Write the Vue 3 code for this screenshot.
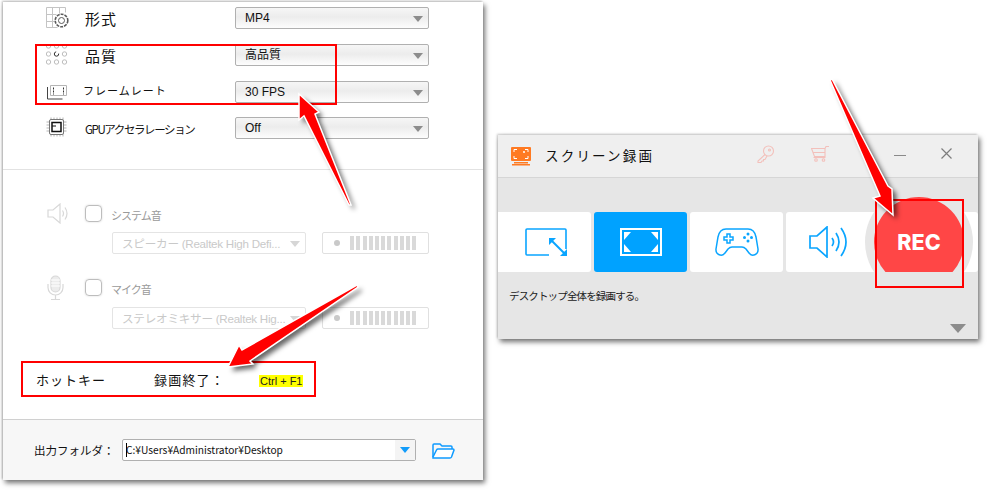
<template>
  <div class="page">
    <section class="panel">
      <div class="settings">
        <div v-for="row in videoRows" :key="row.label" class="row" :class="row.rowClass">
          <span class="row-icon">
            <svg v-if="row.icon === 'format'" width="24" height="22" viewBox="0 0 24 22" fill="none">
              <path d="M.5 .5h19M.5 7.500h10M.5 14.500h8M.5 20.500h11M.5 .5v20M6.500 .5v20M13.500 .5v6M19.500 .5v5" stroke="#c4c4c4" />
              <circle cx="15.500" cy="13.500" r="6.300" stroke="#5a5a5a" stroke-width="1.600" stroke-dasharray="3 1" />
              <circle cx="15.500" cy="13.500" r="3" stroke="#5a5a5a" />
            </svg>
            <svg v-else-if="row.icon === 'quality'" width="22" height="22" viewBox="0 0 22 22" fill="none" stroke="#bdbdbd">
              <circle v-for="d in qualityDots" :key="d.x + '-' + d.y" :cx="d.x" :cy="d.y" r="2.200" :stroke="d.dark ? '#333' : '#bdbdbd'" :stroke-dasharray="d.dark ? '9 3' : null" />
            </svg>
            <svg v-else-if="row.icon === 'frame'" width="22" height="16" viewBox="0 0 22 16" fill="none" class="frame-icon">
              <path d="M4.500 1.500h16v10h-16z" stroke="#b5b5b5" />
              <path d="M1.500 3v12h15" stroke="#444" />
              <path d="M7.500 3.500v7M17.500 3.500v7" stroke="#333" stroke-dasharray="2 1" />
            </svg>
            <svg v-else width="21" height="20" viewBox="0 0 21 20" fill="none">
              <path d="M5 .5v19M8 .5v19M11 .5v19M14 .5v19M17 .5v19M.5 5h20M.5 8h20M.5 11h20M.5 14h20" stroke="#b5b5b5" />
              <rect x="3.500" y="2.500" width="14" height="15" rx="1.500" fill="#fff" stroke="#777" />
              <path d="M6 5.500h9v9H6z" fill="#fff" stroke="#111" stroke-width="1.500" />
              <path d="M6 9h4" stroke="#111" />
            </svg>
          </span>
          <span class="row-label" :class="row.labelClass">{{ row.label }}</span>
          <div class="select">
            <span>{{ row.value }}</span>
            <i class="caret"></i>
          </div>
        </div>
      </div>

      <div class="audio">
        <div v-for="item in audioRows" :key="item.label" class="audio-item">
          <div class="audio-head">
            <span class="audio-icon">
              <svg v-if="item.icon === 'speaker'" width="22" height="21" viewBox="0 0 22 21" fill="none" stroke="#d8d8d8" stroke-width="1.200">
                <path d="M1 7h5l7-6v19l-7-6H1z" />
                <path d="M15.500 7.500q2 3 0 6M18 4.500q4 6 0 12" />
              </svg>
              <svg v-else width="17" height="25" viewBox="0 0 17 25" fill="none" stroke="#d8d8d8" stroke-width="1.200">
                <rect x="4" y="1" width="9" height="16" rx="4.500" fill="#ececec" />
                <path d="M4 5h9M4 8h9M4 11h9" stroke="#fff" />
                <path d="M1 9v3.500a7.500 7.500 0 0 0 15 0V9M8.500 20v4M4 24.500h9" />
              </svg>
            </span>
            <span class="checkbox"></span>
            <span class="audio-label">{{ item.label }}</span>
          </div>
          <div class="audio-controls">
            <div class="select select-off">
              <span>{{ item.device }}</span>
              <i class="caret"></i>
            </div>
            <div class="meter">
              <i class="meter-dot"></i>
              <i v-for="n in 11" :key="n" class="meter-bar"></i>
            </div>
          </div>
        </div>
      </div>

      <div class="hotkey">
        <span class="hotkey-name">ホットキー</span>
        <span class="hotkey-action">録画終了：</span>
        <mark class="hotkey-keys">Ctrl + F1</mark>
      </div>

      <footer class="output">
        <span class="output-label">出力フォルダ：</span>
        <div class="path-box">
          <span class="path-text"><b class="cursor"></b>C:¥Users¥Administrator¥Desktop</span>
          <span class="path-btn"><i></i></span>
        </div>
        <svg class="folder" width="23" height="16" viewBox="0 0 23 16" fill="none" stroke="#0f9bff" stroke-width="1.500">
          <path d="M1 14V2q0-1 1-1h6l2 2h9q1 0 1 1v2" />
          <path d="M1 15h17q1 0 1.500-1L22 7q0-1-1-1H6q-1 0-1.500 1L1 14z" fill="#fff" />
        </svg>
      </footer>
    </section>

    <section class="recorder">
      <header class="titlebar">
        <svg class="logo" width="20" height="19" viewBox="0 0 20 19">
          <rect x="0" y="0" width="20" height="14" rx="1" fill="#ff7a22" />
          <path d="M3 5V2.500h3M14 2.500h3V5M3 9v2.500h3M14 11.500h3V9" fill="none" stroke="#fff" />
          <circle cx="13" cy="5" r="1" fill="#fff" />
          <path d="M3 15h14v1.500H3zM1 17h18v1.500H1z" fill="#ff7a22" />
        </svg>
        <span class="title">スクリーン録画</span>
        <svg class="tb-key" width="18" height="18" viewBox="0 0 18 18" fill="none" stroke="#f3c0bb" stroke-width="1.100">
          <circle cx="11.500" cy="6" r="5" />
          <circle cx="12.500" cy="5" r="1" />
          <path d="M8 9.500L1 16v1.500h3l1-1.500h1.500V14.500h1.500L10 11" />
        </svg>
        <svg class="tb-cart" width="19" height="16" viewBox="0 0 19 16" fill="none" stroke="#f3c0bb" stroke-width="1.100">
          <path d="M.5 2.500h13.500v8H3.500zM14 2.500l1-2h3M2 6.500h12" />
          <path d="M2.500 11.500h12" />
          <circle cx="5" cy="14" r="1.300" />
          <circle cx="12.500" cy="14" r="1.300" />
        </svg>
        <i class="tb-min"></i>
        <svg class="tb-close" width="11" height="11" viewBox="0 0 11 11" fill="none" stroke="#7d7d7d" stroke-width="1.200">
          <path d="M.5 .5l10 10M10.500 .5l-10 10" />
        </svg>
      </header>

      <div class="rec-body">
        <div class="tiles">
          <div class="tile">
            <svg class="ico-region" width="42" height="28" viewBox="0 0 42 28" fill="none" stroke="#0aa5ff" stroke-width="1.600">
              <path d="M24 27H2q-1 0-1-1V2q0-1 1-1h38q1 0 1 1v19" />
              <path d="M26 12l13 13" stroke-width="2" />
              <path d="M24 10h7l-7 7zM42 28h-7l7-7z" fill="#0aa5ff" stroke="none" />
            </svg>
          </div>
          <div class="tile tile-active">
            <svg width="42" height="28" viewBox="0 0 42 28" fill="none">
              <rect x="1" y="1" width="40" height="26" stroke="#fff" stroke-width="2" />
              <path d="M4 4h7l-7 8zM38 4h-7l7 8zM4 24h7l-7-8zM38 24h-7l7-8z" fill="#fff" />
            </svg>
          </div>
          <div class="tile">
            <svg class="ico-game" width="44" height="30" viewBox="0 0 44 30" fill="none" stroke="#0aa5ff" stroke-width="1.500">
              <path d="M11 2h22c5 0 7 3 8 8l2 12c.5 6-6 8-9 4l-3-4c-1-1-2-2-4-2H17c-2 0-3 1-4 2l-3 4c-3 4-9.500 2-9-4L3 10c1-5 3-8 8-8z" />
              <path d="M9 10h3V7h3v3h3v3h-3v3h-3v-3H9z" />
              <circle cx="33" cy="7" r="1.500" fill="#0aa5ff" stroke="none" />
              <circle cx="29.500" cy="10.500" r="1.500" fill="#0aa5ff" stroke="none" />
              <circle cx="36.500" cy="10.500" r="1.500" fill="#0aa5ff" stroke="none" />
              <circle cx="33" cy="14" r="1.500" fill="#0aa5ff" stroke="none" />
            </svg>
          </div>
          <div class="tile">
            <svg class="ico-sound" width="40" height="32" viewBox="0 0 40 32" fill="none" stroke="#0aa5ff" stroke-width="1.700">
              <path d="M1 10h7L18 1v30L8 22H1z" />
              <path d="M23 12q3 4 0 8M27 7q6 9 0 18M32 2q10 14 0 28" />
            </svg>
          </div>
          <div class="tile tile-last"></div>
          <div class="rec-halo">
            <button class="rec-btn">REC</button>
          </div>
        </div>
        <p class="rec-desc">デスクトップ全体を録画する。</p>
        <i class="more"></i>
      </div>
    </section>

    <!-- annotations drawn on top of the screenshot -->
    <div class="mark mark-video"></div>
    <div class="mark mark-hotkey"></div>
    <div class="mark mark-rec"></div>
    <svg class="arrows" width="990" height="490" viewBox="0 0 990 490">
      <g v-for="(pts, i) in arrows" :key="i">
        <polygon :points="pts" class="arrow-shadow" />
        <polygon :points="pts" class="arrow" />
      </g>
    </svg>
  </div>
</template>

<script setup>
const videoRows = [
  { label: '形式', value: 'MP4', icon: 'format', labelClass: 'big', rowClass: 'r-format' },
  { label: '品質', value: '高品質', icon: 'quality', labelClass: 'big', rowClass: 'r-quality' },
  { label: 'フレームレート', value: '30 FPS', icon: 'frame', labelClass: 'spaced', rowClass: 'r-frame' },
  { label: 'GPUアクセラレーション', value: 'Off', icon: 'gpu', labelClass: 'small', rowClass: 'r-gpu' }
]

const audioRows = [
  { label: 'システム音', device: 'スピーカー (Realtek High Defi...', icon: 'speaker' },
  { label: 'マイク音', device: 'ステレオミキサー (Realtek Hig...', icon: 'mic' }
]

const qualityDots = []
for (const y of [2, 10, 18]) {
  for (const x of [2.5, 10.5, 18.5]) {
    qualityDots.push({ x, y, dark: x === 10.5 && y === 10 })
  }
}

const arrows = [
  '299,94 319,112 315,114 351,205 349,205 304,116 299,120',
  '228,367 239,345 242,350 357,285 358,287 250,361 253,364',
  '893,215 873,198 880,196 830,80 832,79 888,186 892,189'
]
</script>

<style>
html, body {
  margin: 0;
  background: #fff;
}
</style>

<style scoped>
.page {
  position: relative;
  display: flex;
  align-items: flex-start;
  width: 990px;
  height: 490px;
  overflow: hidden;
  padding: 2px 0 0 3px;
  box-sizing: border-box;
  font-family: "Noto Sans CJK JP", "Liberation Sans", sans-serif;
  color: #111;
}

.panel {
  width: 480px;
  height: 478px;
  display: flex;
  flex-direction: column;
  background: #fff;
  box-shadow: 2px 3px 5px rgba(0, 0, 0, 0.55), -1px -1px 2px rgba(0, 0, 0, 0.25);
}

.settings {
  height: 162px;
  border-bottom: 1px solid #e2e2e2;
  padding-top: 5px;
}

.row {
  display: flex;
  align-items: center;
  height: 22px;
  padding-left: 43px;
}

.r-quality { margin-top: 15px; }
.r-frame { margin-top: 15px; }
.r-gpu { margin-top: 14px; }

.row-icon {
  width: 39px;
  flex: none;
  display: flex;
}

.r-gpu .row-icon {
  margin-top: -2px;
}

.row-label {
  flex: 1;
  white-space: nowrap;
}

.row-label.big {
  font-size: 15px;
  letter-spacing: 1px;
}

.row-label.spaced {
  font-size: 11px;
  letter-spacing: 1px;
  margin: -5px 0 0 -2px;
}

.row-label.small {
  font-size: 11.500px;
  letter-spacing: -1.400px;
  margin-top: 2px;
}

.select {
  position: relative;
  width: 194px;
  height: 22px;
  margin-right: 54px;
  flex: none;
  box-sizing: border-box;
  border: 1px solid #b0b0b0;
  border-radius: 2px;
  background: linear-gradient(#f6f6f6, #ececec 45%, #fdfdfd);
  padding-left: 9px;
  font-family: "Liberation Sans", "Noto Sans CJK JP", sans-serif;
  font-size: 12px;
  line-height: 21px;
  white-space: nowrap;
  color: #111;
}

.caret {
  position: absolute;
  right: 5px;
  top: 8px;
  width: 0;
  height: 0;
  border-left: 5.500px solid transparent;
  border-right: 5.500px solid transparent;
  border-top: 6px solid #8c8c8c;
}

.audio {
  padding-top: 34px;
}

.audio-item {
  height: 74px;
}

.audio-item:last-child .audio-controls {
  margin-top: 11px;
}

.audio-head {
  display: flex;
  align-items: center;
  height: 18px;
  padding-left: 43px;
}

.audio-icon {
  width: 39px;
  height: 18px;
  flex: none;
  display: flex;
  align-items: center;
  justify-content: flex-start;
  padding-left: 1px;
  box-sizing: border-box;
}

.checkbox {
  width: 17px;
  height: 17px;
  flex: none;
  box-sizing: border-box;
  border: 1px solid #bdbdbd;
  border-radius: 4px;
  box-shadow: 0 0 2px #d5d5d5;
}

.audio-label {
  margin: 4px 0 0 9px;
  font-size: 11px;
  letter-spacing: -1px;
  color: #9a9a9a;
}

.audio-controls {
  display: flex;
  gap: 16px;
  margin: 10px 0 0 109px;
}

.select-off {
  margin-right: 0;
  border-color: #e4e4e4;
  background: #fff;
  color: #c9c9c9;
  font-size: 11.600px;
  letter-spacing: -0.250px;
}

.select-off .caret {
  border-top-color: #d6d6d6;
  right: 5px;
}

.meter {
  display: flex;
  align-items: center;
  width: 107px;
  height: 22px;
  box-sizing: border-box;
  border: 1px solid #e0e0e0;
  border-radius: 2px;
  padding-left: 11px;
  gap: 2.200px;
}

.meter-dot {
  width: 6px;
  height: 6px;
  margin-right: 8px;
  border-radius: 50%;
  background: #c9c9c9;
}

.meter-bar {
  width: 4px;
  height: 14px;
  background: #d9d9d9;
}

.hotkey {
  display: flex;
  align-items: center;
  height: 20px;
  margin-top: 17px;
  padding-left: 33px;
  font-size: 13px;
}

.hotkey-name {
  width: 118px;
  letter-spacing: 1px;
}

.hotkey-action {
  width: 105px;
  letter-spacing: 1.200px;
}

.hotkey-keys {
  margin-top: 3px;
  background: #ffff00;
  color: #222;
  font-family: "Liberation Sans", sans-serif;
  font-size: 11px;
  line-height: 12px;
  padding: 0 1px;
}

.output {
  display: flex;
  align-items: center;
  margin-top: auto;
  height: 61px;
  box-sizing: border-box;
  border-top: 1px solid #d0d0d0;
  background: #f7f7f7;
  padding-left: 31px;
}

.output-label {
  width: 88px;
  font-size: 11.500px;
}

.path-box {
  display: flex;
  align-items: center;
  width: 294px;
  height: 22px;
  box-sizing: border-box;
  border: 1px solid #b0b0b0;
  border-radius: 2px;
  background: #fff;
}

.path-text {
  flex: 1;
  padding: 0 0 2px 3px;
  font-size: 10.200px;
  white-space: nowrap;
}

.cursor {
  display: inline-block;
  width: 1px;
  height: 14px;
  margin-right: -1px;
  vertical-align: -3px;
  background: #000;
}

.path-btn {
  width: 20px;
  height: 20px;
  display: flex;
  align-items: center;
  justify-content: center;
  background: #f4f4f4;
}

.path-btn i {
  width: 0;
  height: 0;
  border-left: 5.500px solid transparent;
  border-right: 5.500px solid transparent;
  border-top: 6px solid #129cfa;
}

.folder {
  margin: 2px 0 0 16px;
}

.recorder {
  width: 480px;
  height: 204px;
  margin: 133px 0 0 15px;
  background: #e6e6e6;
  box-shadow: 2px 3px 5px rgba(0, 0, 0, 0.55), -1px -1px 2px rgba(0, 0, 0, 0.2);
}

.titlebar {
  display: flex;
  align-items: center;
  height: 43px;
  box-sizing: border-box;
  background: #efefef;
  border-bottom: 1px solid #d6d6d6;
  padding-left: 13px;
}

.logo {
  flex: none;
}

.title {
  margin: 0 0 3px 14px;
  width: 212px;
  font-size: 13.500px;
  letter-spacing: 2.200px;
  white-space: nowrap;
}

.tb-key { margin-bottom: 5px; }
.tb-cart { margin: 0 0 5px 36px; }

.tb-min {
  width: 12px;
  height: 1px;
  margin: 0 0 2px 64px;
  background: #8a8a8a;
}

.tb-close {
  margin: 0 0 6px 35px;
}

.rec-body {
  position: relative;
  height: 161px;
}

.tiles {
  position: relative;
  display: flex;
  gap: 3px;
  padding-top: 34px;
  overflow: hidden;
}

.tile {
  width: 93px;
  height: 60px;
  flex: none;
  display: flex;
  align-items: center;
  justify-content: center;
  background: #fff;
  border-radius: 0 3px 3px 0;
}

.tile + .tile {
  border-radius: 3px;
}

.tile-active {
  background: #00a2ff;
}

.tile-last {
  width: 96px;
}

.ico-region { margin-left: 2px; }
.ico-game { margin-left: 1px; }
.ico-sound { margin-right: 8px; }

.rec-halo {
  position: absolute;
  left: 367px;
  top: 10px;
  width: 108px;
  height: 108px;
  display: flex;
  align-items: center;
  justify-content: center;
  border-radius: 50%;
  background: #e6e6e6;
}

.rec-btn {
  width: 90px;
  height: 90px;
  border: 0;
  padding: 0;
  border-radius: 50%;
  background: #ff4646;
  color: #fff;
  font-family: "Inter", "Liberation Sans", sans-serif;
  font-size: 21.500px;
  font-weight: 800;
}

.rec-desc {
  margin: 16px 0 0 11px;
  font-size: 10.500px;
  letter-spacing: -0.850px;
  color: #222;
}

.more {
  position: absolute;
  right: 12px;
  bottom: 6px;
  width: 0;
  height: 0;
  border-left: 8.500px solid transparent;
  border-right: 8.500px solid transparent;
  border-top: 9px solid #8c8c8c;
}

.mark {
  position: absolute;
  box-sizing: border-box;
  border: 2px solid #f00;
}

.mark-video { left: 35px; top: 44px; width: 302px; height: 61px; }
.mark-hotkey { left: 21px; top: 361px; width: 295px; height: 36px; }
.mark-rec { left: 875px; top: 199px; width: 89px; height: 89px; }

.arrows {
  position: absolute;
  left: 0;
  top: 0;
  pointer-events: none;
}

.arrow-shadow {
  fill: rgba(0, 0, 0, 0.6);
  transform: translate(4px, 4px);
  filter: blur(2.500px);
}

.arrow {
  fill: #f00;
  stroke: #fff;
  stroke-width: 1.500px;
  stroke-linejoin: miter;
}
</style>
